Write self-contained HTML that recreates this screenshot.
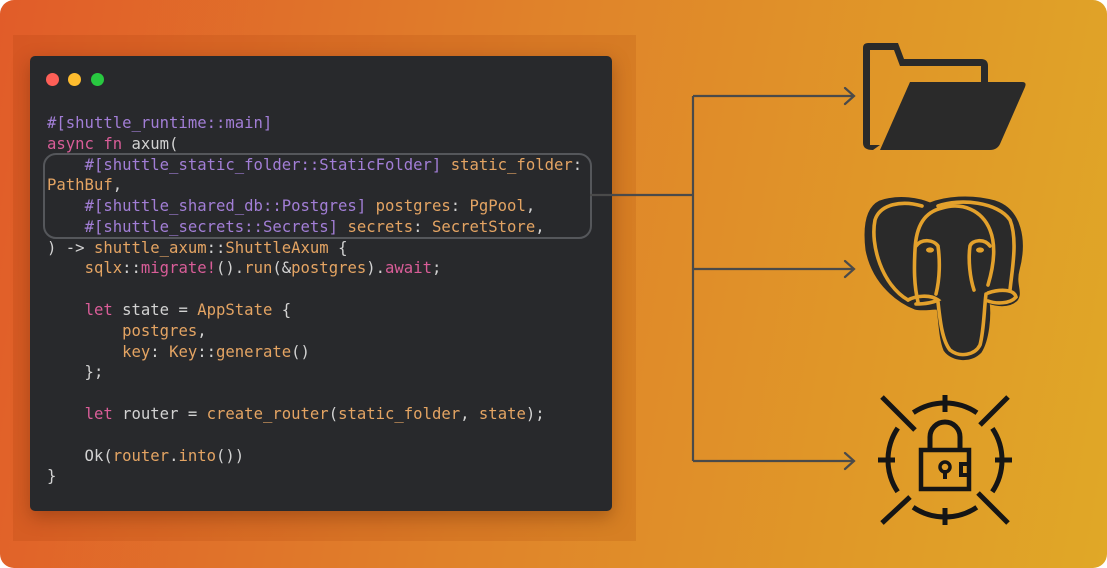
<!DOCTYPE html>
<html><head><meta charset="utf-8"><style>
html,body{margin:0;padding:0;background:#fff;}
body{width:1107px;height:568px;overflow:hidden;position:relative;}
.bg{position:absolute;left:0;top:0;width:1107px;height:568px;border-radius:14px;background:linear-gradient(100deg,#e15c29 0%,#e0822a 45%,#e0a827 100%);overflow:hidden;}
.shadow{position:absolute;left:13px;top:35px;width:623px;height:506px;background:rgba(150,50,0,0.13);}
.panel{position:absolute;left:30px;top:56px;width:582px;height:455px;background:#28292c;border-radius:5px;box-shadow:0 6px 18px rgba(80,30,0,0.35);}
.dot{position:absolute;top:73px;width:13px;height:13px;border-radius:50%;}
pre{position:absolute;left:47px;top:113px;margin:0;font-family:"DejaVu Sans Mono","Liberation Mono",monospace;font-size:15.6px;line-height:20.78px;color:#d2d2d2;}
.p{color:#a27ed6}.k{color:#d95d98}.o{color:#e4a463}
.hl{position:absolute;left:43px;top:153px;width:545px;height:82px;border:2px solid #55575b;border-radius:13px;}
svg{position:absolute;left:0;top:0;}
</style></head><body>
<div class="bg">
<div class="shadow"></div>
<div class="panel"></div>
<div class="dot" style="left:46px;background:#fe5f57"></div>
<div class="dot" style="left:68px;background:#febc2e"></div>
<div class="dot" style="left:91px;background:#28c840"></div>
<div class="hl"></div>
<pre><span class="p">#[shuttle_runtime::main]</span>
<span class="k">async fn</span> axum(
    <span class="p">#[shuttle_static_folder::StaticFolder]</span> <span class="o">static_folder</span>:
<span class="o">PathBuf</span>,
    <span class="p">#[shuttle_shared_db::Postgres]</span> <span class="o">postgres</span>: <span class="o">PgPool</span>,
    <span class="p">#[shuttle_secrets::Secrets]</span> <span class="o">secrets</span>: <span class="o">SecretStore</span>,
) -&gt; <span class="o">shuttle_axum</span>::<span class="o">ShuttleAxum</span> {
    <span class="o">sqlx</span>::<span class="k">migrate!</span>().<span class="o">run</span>(&amp;<span class="o">postgres</span>).<span class="k">await</span>;

    <span class="k">let</span> state = <span class="o">AppState</span> {
        <span class="o">postgres</span>,
        <span class="o">key</span>: <span class="o">Key</span>::<span class="o">generate</span>()
    };

    <span class="k">let</span> router = <span class="o">create_router</span>(<span class="o">static_folder</span>, <span class="o">state</span>);

    Ok(<span class="o">router</span>.<span class="o">into</span>())
}</pre>
<svg width="1107" height="568" viewBox="0 0 1107 568">
<g fill="none" stroke="#4a4a4a" stroke-width="2.2">
<path d="M590 195 H693 M693 96 V461 M693 96 H853 M693 269 H853 M693 461 H853"/>
<path d="M845 88 L854 96 L845 104 M845 261 L854 269 L845 277 M845 453 L854 461 L845 469" stroke-linecap="round"/>
</g>
<g fill="#2a2a2a">
<path d="M866 43 H898 L904 59 H981 Q988 59 988 66 V82 H981 V66 H900 L894 50 H870 V145 H880 L873 150 Q863 150 863 143 V48 Q863 43 868 43 Z"/>
<path d="M910 82 H1022 Q1027 82 1025 87 L1000 144 Q997 150 990 150 H880 Z"/>
</g>
<g transform="translate(860,190)">
<path d="M20 12 C40 5 60 10 70 14 C85 8 110 5 135 12 C160 20 166 50 158 80 C154 95 162 103 156 110 C148 117 136 115 128 112 C130 125 128 150 120 162 C110 172 92 170 85 160 C80 148 80 130 78 118 C70 118 62 120 55 118 C40 112 14 95 7 60 C4 35 8 18 20 12 Z" fill="#2a2a2a" stroke="#2a2a2a" stroke-width="3"/>
<g fill="none" stroke="#e3a12c" stroke-width="3.6" stroke-linecap="round">
<path d="M62 16 C42 10 20 14 15 30 C10 55 22 95 48 110"/>
<path d="M58 112 C54 95 54 78 55 60 C56 35 65 22 82 18 C102 12 122 20 130 40 C136 55 134 75 128 95"/>
<path d="M78 16 C100 8 138 12 150 30 C158 50 152 80 150 100"/>
<path d="M48 110 C55 106 70 104 78 110 C70 114 60 114 56 114"/>
<path d="M128 103 C140 99 154 99 156 107 C150 114 136 114 128 111"/>
<path d="M78 112 C80 130 82 150 90 160 C100 168 115 165 120 155 C124 140 124 120 126 104"/>
<path d="M56 56 C62 48 74 50 78 56 C80 70 80 88 76 104"/>
<path d="M130 56 C124 48 112 50 110 56 C108 70 110 88 114 100"/>
</g>
<ellipse cx="70" cy="60" rx="4" ry="2.6" fill="#e3a12c"/>
<ellipse cx="120" cy="60" rx="4" ry="2.6" fill="#e3a12c"/>
</g>
<g fill="none" stroke="#151515" stroke-width="5">
<circle cx="945" cy="460" r="57" stroke-dasharray="67.5 22" stroke-dashoffset="33.75"/>
<path d="M945 395 V412 M945 508 V525 M878 460 H895 M995 460 H1012"/>
<path d="M882 397 L915 430 M1008 397 L980 425 M882 523 L910 497 M1008 523 L978 493"/>
<path d="M930 449 V437 A15 15 0 0 1 960 437 V449"/>
<rect x="921" y="450" width="48" height="39" stroke-width="4.5"/>
<path d="M945 470 V479" stroke-width="4"/>
<path d="M969 464 H961 V475 H969" stroke-width="4"/>
</g>
<circle cx="945" cy="467" r="5" fill="none" stroke="#151515" stroke-width="3.5"/>
</svg>
</div>
</body></html>
